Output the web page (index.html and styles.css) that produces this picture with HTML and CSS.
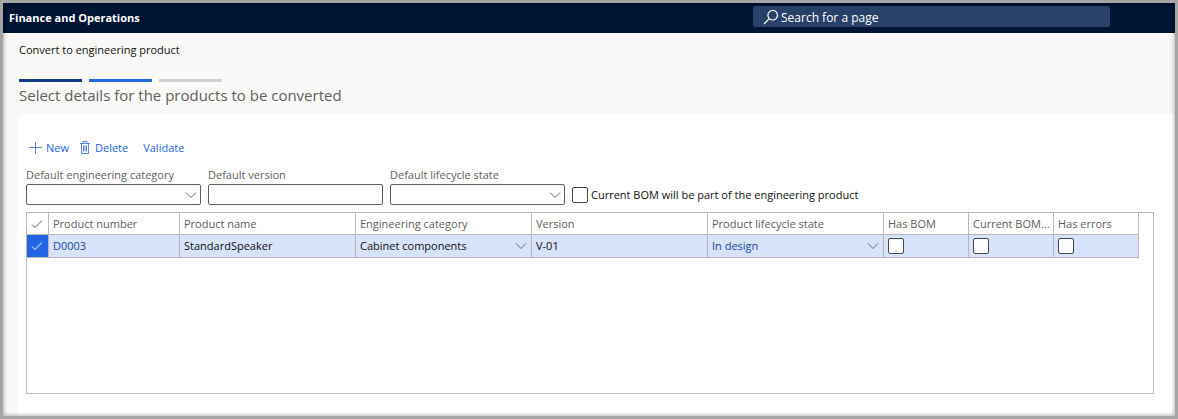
FILE: index.html
```html
<!DOCTYPE html>
<html lang="en">
<head>
<meta charset="utf-8">
<title>Convert to engineering product</title>
<link rel="stylesheet" href="styles.css">
</head>
<body>
<div class="frame">
  <header class="topbar">
    <span class="brand">Finance and Operations</span>
    <label class="search">
      <svg class="search-icon" width="16" height="16" viewBox="0 0 16 16" aria-hidden="true"><circle cx="9.7" cy="6.2" r="4.8"/><path d="M6.2 9.7L1 15"/></svg>
      <input class="search-input" type="text" placeholder="Search for a page" aria-label="Search for a page">
    </label>
  </header>
  <main class="page">
    <div class="crumb">Convert to engineering product</div>
    <div class="steps">
      <span class="step step-done"></span>
      <span class="step step-current"></span>
      <span class="step"></span>
    </div>
    <h1 class="title">Select details for the products to be converted</h1>
    <section class="panel">
      <div class="toolbar">
        <button class="action" type="button"><svg class="action-icon" width="13" height="14" viewBox="0 0 13 14" aria-hidden="true"><path d="M6.5 1v12M0 6.5h13"/></svg>New</button>
        <button class="action" type="button"><svg class="action-icon" width="12" height="14" viewBox="0 0 12 14" aria-hidden="true"><path d="M1 2.5h10M4 2.5v-2h4v2M2.5 2.5v10h7v-10M4.5 4.5v6M6 4.5v6M7.5 4.5v6"/></svg>Delete</button>
        <button class="action action-plain" type="button">Validate</button>
      </div>
      <div class="filters">
        <div class="field">
          <label class="field-label" for="category">Default engineering category</label>
          <div class="picker">
            <select class="box" id="category"><option></option></select>
            <svg class="chevron" width="12" height="8" viewBox="0 0 12 8" aria-hidden="true"><path d="M1 1.5l5 5 5-5"/></svg>
          </div>
        </div>
        <div class="field">
          <label class="field-label" for="version">Default version</label>
          <input class="box" id="version" type="text">
        </div>
        <div class="field">
          <label class="field-label" for="state">Default lifecycle state</label>
          <div class="picker">
            <select class="box" id="state"><option></option></select>
            <svg class="chevron" width="12" height="8" viewBox="0 0 12 8" aria-hidden="true"><path d="M1 1.5l5 5 5-5"/></svg>
          </div>
        </div>
        <label class="option"><input class="tick" type="checkbox">Current BOM will be part of the engineering product</label>
      </div>
      <div class="grid">
        <table class="table">
          <colgroup>
            <col class="col-mark"><col class="col-number"><col class="col-wide"><col class="col-wide"><col class="col-wide"><col class="col-wide"><col class="col-flag"><col class="col-flag"><col class="col-flag">
          </colgroup>
          <thead>
            <tr>
              <th class="mark"><svg class="check" width="12" height="10" viewBox="0 0 12 10" aria-label="Select all"><path d="M1 5.5l3 3 7-7"/></svg></th>
              <th>Product number</th>
              <th>Product name</th>
              <th>Engineering category</th>
              <th>Version</th>
              <th>Product lifecycle state</th>
              <th>Has BOM</th>
              <th>Current BOM...</th>
              <th>Has errors</th>
            </tr>
          </thead>
          <tbody>
            <tr>
              <td class="mark mark-on"><svg class="check" width="12" height="10" viewBox="0 0 12 10" aria-label="Selected"><path d="M1 5.5l3 3 7-7"/></svg></td>
              <td><a class="link" href="#">D0003</a></td>
              <td>StandardSpeaker</td>
              <td><div class="picker">
                <select class="cell-select" aria-label="Engineering category"><option>Cabinet components</option></select>
                <svg class="chevron" width="12" height="8" viewBox="0 0 12 8" aria-hidden="true"><path d="M1 1.5l5 5 5-5"/></svg>
              </div></td>
              <td>V-01</td>
              <td><div class="picker">
                <select class="cell-select link" aria-label="Product lifecycle state"><option>In design</option></select>
                <svg class="chevron" width="12" height="8" viewBox="0 0 12 8" aria-hidden="true"><path d="M1 1.5l5 5 5-5"/></svg>
              </div></td>
              <td><input class="tick" type="checkbox" aria-label="Has BOM"></td>
              <td><input class="tick" type="checkbox" aria-label="Current BOM"></td>
              <td><input class="tick" type="checkbox" aria-label="Has errors"></td>
            </tr>
          </tbody>
        </table>
      </div>
    </section>
  </main>
</div>
</body>
</html>
```
FILE: styles.css
```css
* {
  box-sizing: border-box;
}

body {
  margin: 0;
  font: 11px/16px "Open Sans", "Noto Sans", sans-serif;
  color: #111;
}

button,
input,
select {
  margin: 0;
  padding: 0;
  border: 0;
  background: none;
  font: inherit;
  color: inherit;
}

.frame {
  position: relative;
  display: flex;
  flex-direction: column;
  min-height: 100vh;
  border: 3px solid #a5a5a5;
  background: #faf9f8;
}

.frame::after {
  content: "";
  position: absolute;
  inset: 0;
  box-shadow: inset 0 0 5px rgba(0, 0, 0, 0.4);
  pointer-events: none;
}

.topbar {
  display: flex;
  align-items: flex-start;
  justify-content: space-between;
  height: 30px;
  padding: 3px 65px 0 6px;
  background: #001433;
  color: #fff;
}

.brand {
  font-weight: 700;
  line-height: 24px;
}

.search {
  display: flex;
  align-items: center;
  gap: 2px;
  width: 357px;
  height: 21px;
  padding-left: 10px;
  border-radius: 2px;
  background: #274168;
}

.search-icon {
  flex: none;
  fill: none;
  stroke: #fff;
  stroke-width: 1.2;
}

.search-input {
  flex: 1;
  height: 21px;
  padding-top: 2px;
  font-size: 12px;
  outline: none;
}

.search-input::placeholder {
  color: #fff;
  opacity: 1;
}

.page {
  flex: 1;
  display: flex;
  flex-direction: column;
  padding: 9px 0 0 16px;
}

.steps {
  display: flex;
  gap: 7px;
  margin-top: 21px;
}

.step {
  width: 63px;
  height: 3px;
  background: #d2d0ce;
}

.step-done {
  background: #123a82;
}

.step-current {
  background: #2266e3;
}

.title {
  margin: 3px 0 9px;
  font-size: 15px;
  font-weight: 400;
  line-height: 20px;
  color: #605e5c;
}

.panel {
  flex: 1;
  display: flex;
  flex-direction: column;
  padding: 26px 21px 22px 7px;
  background: #fff;
}

.toolbar {
  display: flex;
  gap: 10px;
  padding-left: 3px;
}

.action {
  display: flex;
  align-items: center;
  gap: 4px;
  color: #2266e3;
}

.action-plain {
  margin-left: 5px;
}

.action-icon {
  fill: none;
  stroke: #5a85e6;
  stroke-width: 1;
}

.filters {
  display: flex;
  flex-wrap: wrap;
  align-items: flex-end;
  gap: 7px;
  margin: 11px 0 7px;
}

.field {
  display: flex;
  flex-direction: column;
  gap: 1px;
  width: 175px;
}

.field-label {
  color: #605e5c;
}

.picker {
  display: grid;
  align-items: center;
}

.picker > * {
  grid-area: 1 / 1;
}

.box {
  width: 100%;
  height: 21px;
  padding: 0 4px;
  border: 1px solid #605e5c;
  border-radius: 2px;
  background: #fff;
  appearance: none;
}

.chevron {
  justify-self: end;
  margin-right: 4px;
  fill: none;
  stroke: #6b6b6b;
  stroke-width: 1;
  pointer-events: none;
}

.option {
  display: flex;
  align-items: center;
  gap: 3px;
  height: 20px;
}

.tick {
  display: block;
  flex: none;
  width: 16px;
  height: 16px;
  border: 1px solid #484644;
  border-radius: 2px;
  background: #fff;
  appearance: none;
}

.tick:checked {
  background: #2266e3;
}

.grid {
  flex: 1;
  overflow: auto hidden;
  border: 1px solid #bab8b7;
}

.table {
  width: 1112px;
  table-layout: fixed;
  border-collapse: separate;
  border-spacing: 0;
}

.col-mark {
  width: 22px;
}

.col-number {
  width: 131px;
}

.col-wide {
  width: 176px;
}

.col-flag {
  width: 85px;
}

th,
td {
  height: 23px;
  padding: 0 0 0 4px;
  border: solid #bab8b7;
  border-width: 0 1px 1px 0;
  text-align: left;
  font-weight: 400;
  white-space: nowrap;
}

th {
  height: 22px;
  color: #605e5c;
}

td {
  background: #d7e3fb;
}

.mark {
  padding: 0;
}

.check {
  display: block;
  margin-left: 4px;
  fill: none;
  stroke: #605e5c;
  stroke-width: 1;
}

.mark-on {
  background: #2266e3;
}

.mark-on .check {
  stroke: #fff;
}

.cell-select {
  width: 100%;
  appearance: none;
}

.link {
  color: #1b4aa0;
  text-decoration: none;
}
```
